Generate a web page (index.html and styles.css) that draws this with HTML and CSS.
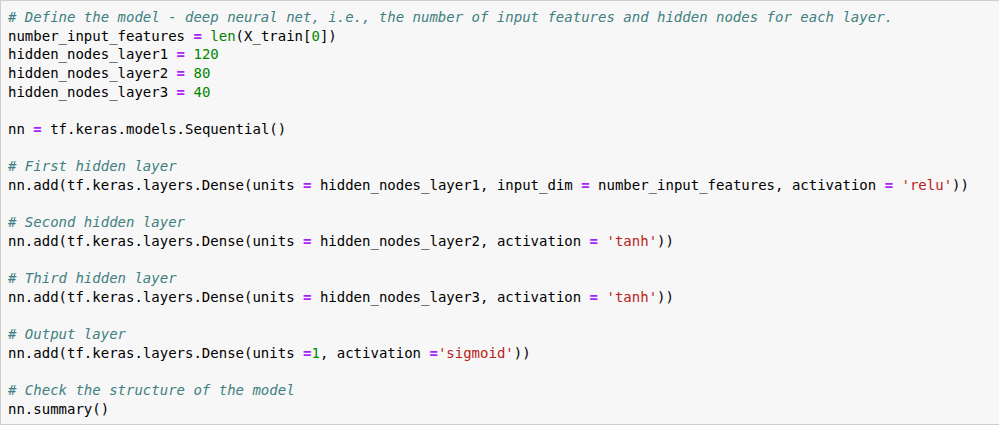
FILE: index.html
```html
<!DOCTYPE html>
<html>
<head>
<meta charset="utf-8">
<link rel="stylesheet" href="styles.css">
</head>
<body>
<div class="cell">
<div class="code">
<div class="ln"><span class="c"># Define the model - deep neural net, i.e., the number of input features and hidden nodes for each layer.</span></div>
<div class="ln">number_input_features <span class="o">=</span> <span class="b">len</span>(X_train[<span class="n">0</span>])</div>
<div class="ln">hidden_nodes_layer1 <span class="o">=</span> <span class="n">120</span></div>
<div class="ln">hidden_nodes_layer2 <span class="o">=</span> <span class="n">80</span></div>
<div class="ln">hidden_nodes_layer3 <span class="o">=</span> <span class="n">40</span></div>
<div class="ln"></div>
<div class="ln">nn <span class="o">=</span> tf.keras.models.Sequential()</div>
<div class="ln"></div>
<div class="ln"><span class="c"># First hidden layer</span></div>
<div class="ln">nn.add(tf.keras.layers.Dense(units <span class="o">=</span> hidden_nodes_layer1, input_dim <span class="o">=</span> number_input_features, activation <span class="o">=</span> <span class="s">'relu'</span>))</div>
<div class="ln"></div>
<div class="ln"><span class="c"># Second hidden layer</span></div>
<div class="ln">nn.add(tf.keras.layers.Dense(units <span class="o">=</span> hidden_nodes_layer2, activation <span class="o">=</span> <span class="s">'tanh'</span>))</div>
<div class="ln"></div>
<div class="ln"><span class="c"># Third hidden layer</span></div>
<div class="ln">nn.add(tf.keras.layers.Dense(units <span class="o">=</span> hidden_nodes_layer3, activation <span class="o">=</span> <span class="s">'tanh'</span>))</div>
<div class="ln"></div>
<div class="ln"><span class="c"># Output layer</span></div>
<div class="ln">nn.add(tf.keras.layers.Dense(units <span class="o">=</span><span class="n">1</span>, activation <span class="o">=</span><span class="s">'sigmoid'</span>))</div>
<div class="ln"></div>
<div class="ln"><span class="c"># Check the structure of the model</span></div>
<div class="ln">nn.summary()</div>
</div>
</div>
</body>
</html>
```

FILE: styles.css
```css
html, body {
  margin: 0;
  padding: 0;
  background: #ffffff;
  overflow: hidden;
}

.cell {
  width: 1010px;
  height: 423px;
  box-sizing: content-box;
  background: #f7f7f7;
  border: 1px solid #cfcfcf;
  border-right: none;
}

.code {
  padding: 7px 0 0 7px;
  font-family: "DejaVu Sans Mono", monospace;
  font-size: 14px;
  color: #000000;
}

.ln {
  height: 18.67px;
  line-height: 18.67px;
  white-space: pre;
}

.c {
  color: #408080;
  font-style: italic;
}

.o {
  color: #aa22ff;
  font-weight: bold;
}

.b {
  color: #008000;
}

.n {
  color: #008800;
}

.s {
  color: #ba2121;
}
```
